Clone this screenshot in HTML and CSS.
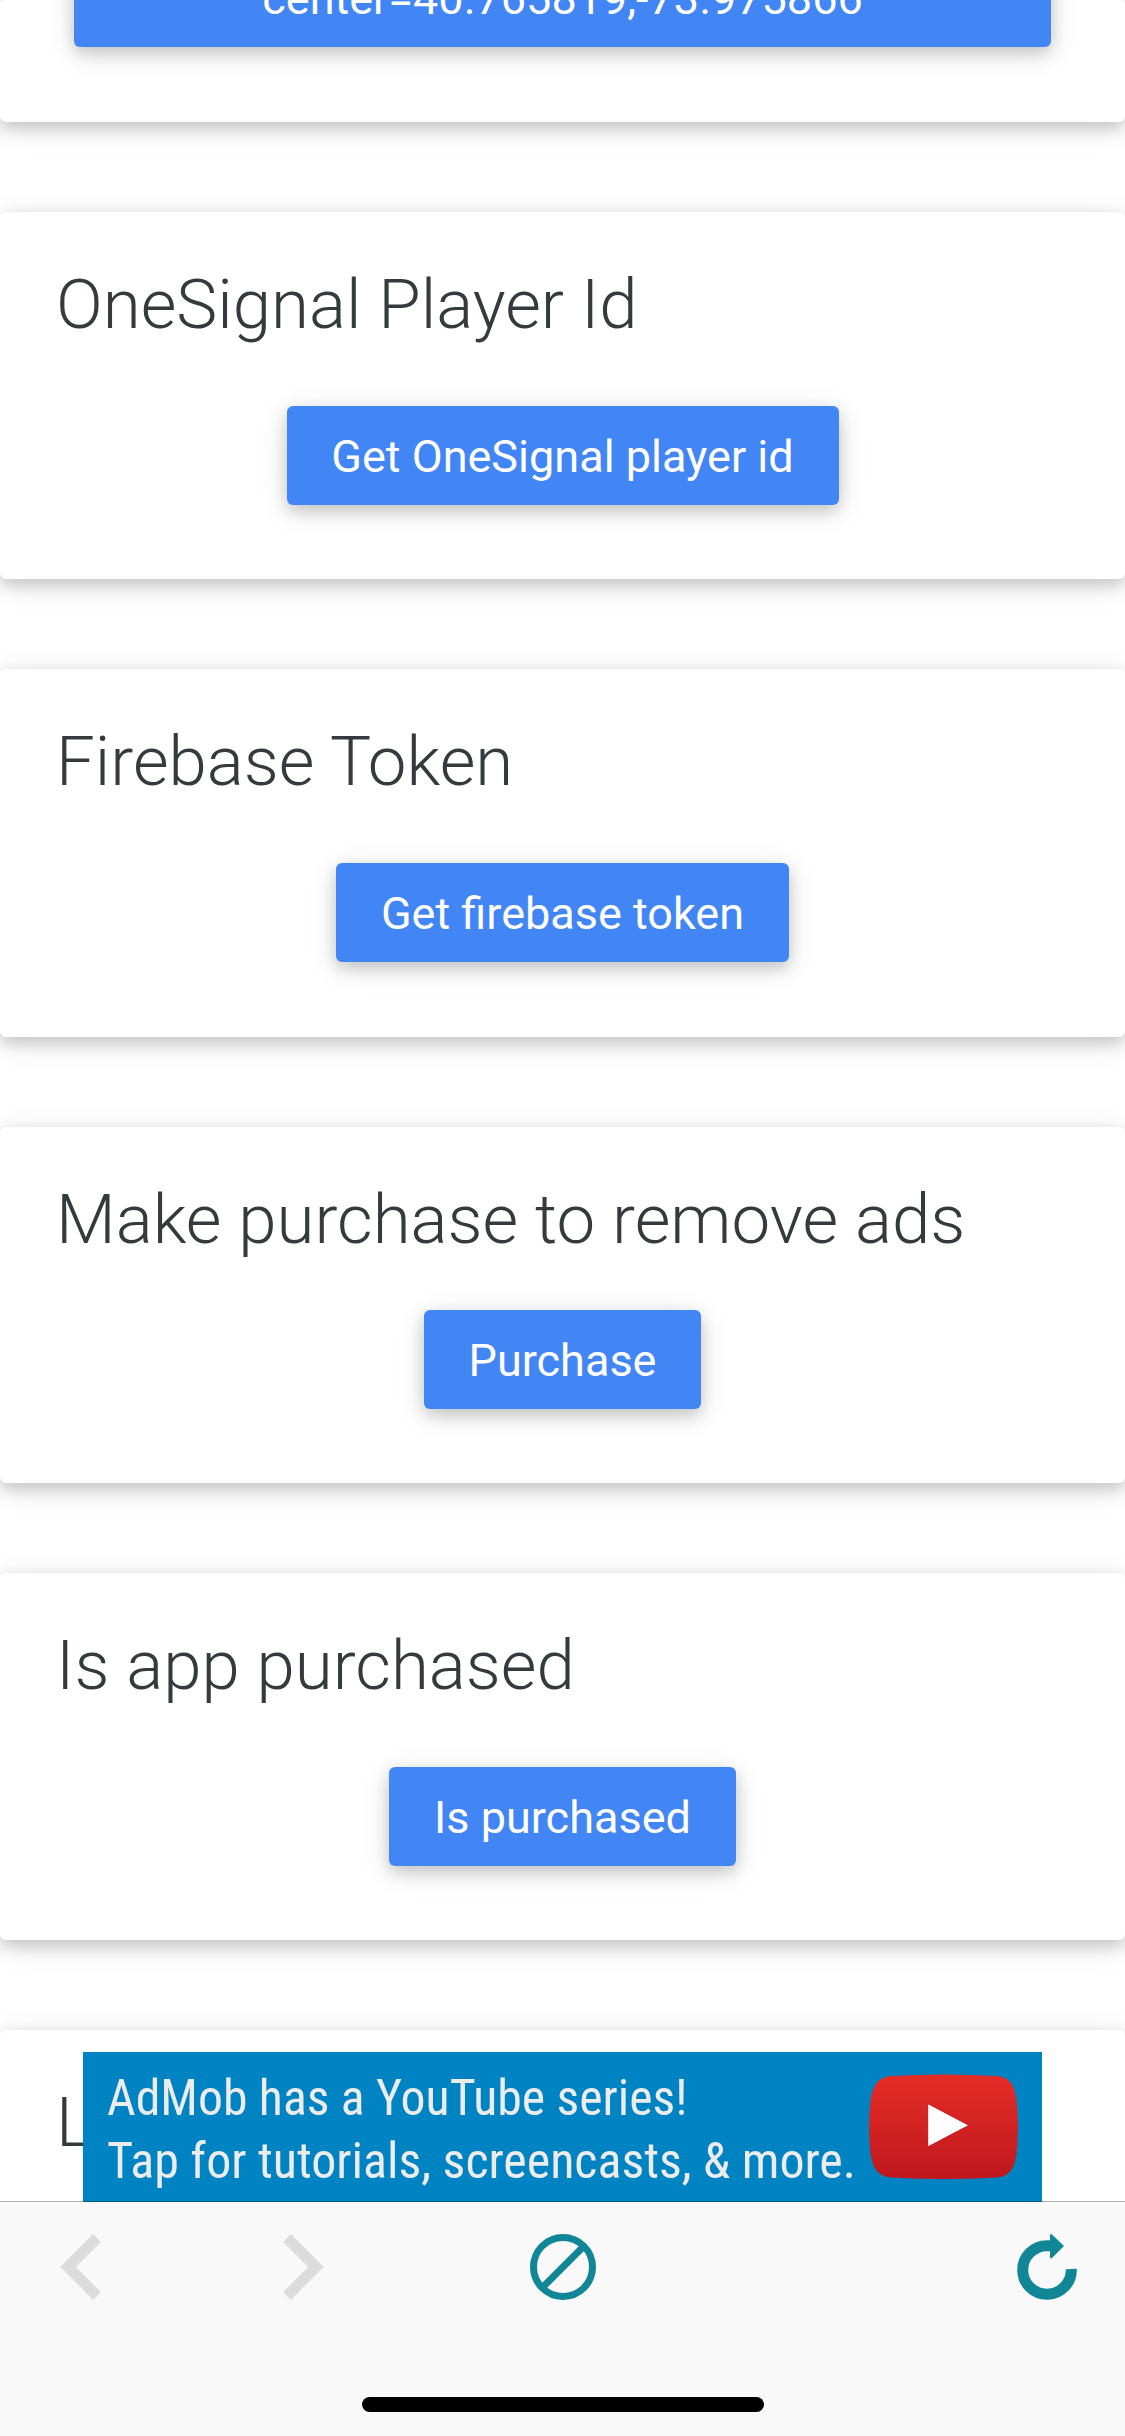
FILE: index.html
```html
<!DOCTYPE html>
<html lang="en">
<head>
<meta charset="utf-8">
<title>Features</title>
<link rel="stylesheet" href="styles.css">
</head>
<body>
<div class="screen">
  <main class="feed">
    <section class="card card-first"><button class="btn btn-wide">center=40.765819,-73.975866</button></section>
    <section class="card"><h2 class="title">OneSignal Player Id</h2><button class="btn btn-player">Get OneSignal player id</button></section>
    <section class="card card-token"><h2 class="title">Firebase Token</h2><button class="btn btn-token">Get firebase token</button></section>
    <section class="card card-short"><h2 class="title">Make purchase to remove ads</h2><button class="btn btn-buy">Purchase</button></section>
    <section class="card"><h2 class="title">Is app purchased</h2><button class="btn btn-check">Is purchased</button></section>
    <section class="card"><h2 class="title">L</h2></section>
  </main>
  <aside class="ad">
    <div class="ad-copy">
      <div class="ad-line ad-line-one">AdMob has a YouTube series!</div>
      <div class="ad-line ad-line-two">Tap for tutorials, screencasts, &amp; more.</div>
    </div>
    <svg class="ad-play" viewBox="0 0 152 108">
      <defs><linearGradient id="red" x1="0" y1="0" x2="0" y2="1"><stop offset="0" stop-color="#e52d27"/><stop offset="1" stop-color="#bf171d"/></linearGradient></defs>
      <path fill="url(#red)" d="M24.500 3Q76.500 0 129.500 3C143.500 4 147.500 13 149.500 28Q152.500 54 149.500 80C147.500 95 143.500 103 129.500 104.500Q76.500 107.500 24.500 104.500C10.500 103 5.500 95 3.500 80Q.5 54 3.500 28C5.500 13 10.500 4 24.500 3Z"/>
      <path fill="#fff" stroke="#c9151b" stroke-width="1" d="M60.700 30.500V74L102 52.300Z"/>
    </svg>
  </aside>
  <nav class="toolbar">
    <div class="icons">
      <svg class="icon-back" viewBox="0 0 41 66"><path d="M37 4L8 33L37 62"/></svg>
      <svg class="icon-next" viewBox="0 0 41 66"><path d="M4 4L33 33L4 62"/></svg>
      <svg class="icon-stop" viewBox="0 0 66 66"><circle cx="33" cy="33" r="29.500"/><path d="M13 53L53 13"/></svg>
      <svg class="icon-reload" viewBox="0 0 60 66"><path class="arc" d="M54.300 35A24.300 24.300 0 1 1 30 11.700H36"/><path class="head" d="M33 0.500Q34-.2 35 .5L47 12L35 24Q34 24.700 33 24Z"/></svg>
    </div>
    <div class="home"></div>
  </nav>
</div>
</body>
</html>
```
FILE: styles.css
```css
* { box-sizing: border-box; }
body { margin: 0; background: #fff; font-family: Roboto, sans-serif; }
.screen { position: relative; width: 1125px; height: 2436px; overflow: hidden; }
.feed { display: flex; flex-direction: column; gap: 90px; height: 2201px; overflow: hidden; }
.card { flex: none; height: 367px; padding: 46px 56px 0; display: flex; flex-direction: column; align-items: center; border-radius: 6px; background: #fff; box-shadow: 0 6px 15px rgba(0,0,0,.16), 0 6px 30px rgba(0,0,0,.12); }
.card-first { height: 122px; padding: 0; justify-content: flex-start; }
.card-token { height: 368px; }
.card-short { height: 356px; }
.title { align-self: flex-start; margin: 0 0 55px; font-size: 69px; line-height: 93px; font-weight: 300; color: #373a3c; white-space: nowrap; }
.card-short .title { margin-bottom: 44px; }
.btn { flex: none; height: 99px; padding: 2px 0 0; border: 0; border-radius: 6px; background: #4285f4; color: #fff; font: 400 45px/68px Roboto, sans-serif; box-shadow: 0 6px 15px rgba(0,0,0,.16), 0 6px 30px rgba(0,0,0,.12); }
.btn-wide { width: 977px; height: 167px; margin-top: -120px; padding: 70px 0 0; }
.btn-player { width: 552px; }
.btn-token { width: 453px; }
.btn-buy { width: 277px; }
.btn-check { width: 347px; }
.ad { position: absolute; left: 83px; top: 2052px; width: 959px; height: 150px; display: flex; background: #0083c3; color: #ececec; }
.ad-copy { width: 784px; padding: 15px 0 0 24px; }
.ad-line { width: max-content; font-family: "Roboto Condensed", Roboto, sans-serif; font-stretch: 75%; font-size: 50px; line-height: 63px; white-space: nowrap; transform-origin: 0 50%; }
.ad-line-one { transform: scaleX(.995); }
.ad-play { flex: none; width: 152px; height: 108px; margin-top: 21px; }
.toolbar { position: absolute; left: 0; top: 2201px; width: 1125px; height: 235px; border-top: 1px solid rgba(0,0,0,.3); background: #f9f9f9; background-clip: padding-box; }
.icons { display: flex; padding: 32px 48px 0 60px; height: 98px; }
.icons svg { flex: none; height: 66px; fill: none; }
.icon-back, .icon-next { width: 41px; stroke: #dcdcdc; stroke-width: 11px; }
.icon-next { margin-left: 182px; }
.icon-stop { width: 66px; margin-left: 206px; stroke: #108697; stroke-width: 7px; }
.icon-reload { width: 60px; margin-left: auto; }
.icon-reload .arc { stroke: #108697; stroke-width: 11px; }
.icon-reload .head { fill: #108697; }
.home { width: 402px; height: 15px; margin: 97px auto 0; border-radius: 8px; background: #000; }
```
